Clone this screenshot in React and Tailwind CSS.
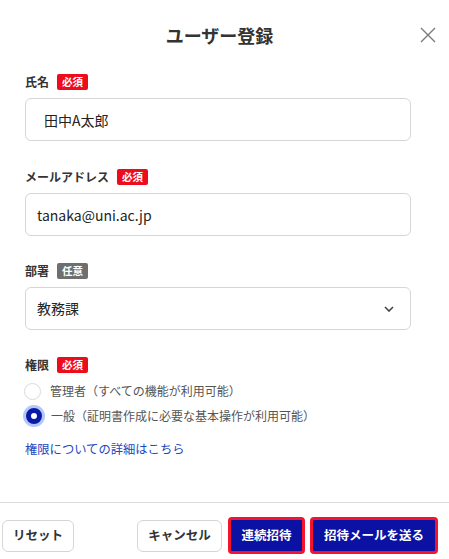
import { useState } from "react";

function Badge({ children, gray }) {
  return (
    <span
      className={`inline-flex items-center justify-center h-4 w-[31px] rounded-[2px] text-[10.5px] font-bold leading-none text-white ${
        gray ? "bg-[#6f6f6f]" : "bg-[#ec0c1c]"
      }`}
    >
      {children}
    </span>
  );
}

function FieldLabel({ label, badge, gray }) {
  return (
    <div className="flex h-4 items-center gap-2">
      <span className="text-[12px] font-bold leading-none text-[#333]">{label}</span>
      <Badge gray={gray}>{badge}</Badge>
    </div>
  );
}

function Radio({ checked, label, onClick }) {
  return (
    <label className="flex h-5 cursor-pointer items-center gap-[9px]" onClick={onClick}>
      {checked ? (
        <span className="ml-[1px] h-4 w-4 rounded-full border-[5px] border-[#0a1aa8] bg-white ring-[3px] ring-[#b3c8fa]" />
      ) : (
        <span className="ml-[-1px] h-[17px] w-[17px] rounded-full border border-[#d9d9d9] bg-white" />
      )}
      <span className="text-[12px] leading-none text-[#555]">{label}</span>
    </label>
  );
}

export default function App() {
  const [role, setRole] = useState("general");

  return (
    <div className="relative h-[559px] w-[449px] overflow-hidden bg-white font-['Noto_Sans_CJK_JP','Noto_Sans',sans-serif] text-[#222]">
      {/* Header */}
      <div className="relative flex h-[70px] items-center justify-center pr-[10px]">
        <h1 className="text-[18px] font-bold leading-none text-[#333]">ユーザー登録</h1>
        <button className="absolute right-[13px] top-[27px] text-[#7a7a7a]">
          <svg width="16" height="16" viewBox="0 0 16 16" fill="none" stroke="currentColor" strokeWidth="1.4">
            <path d="M1 1 L15 15 M15 1 L1 15" />
          </svg>
        </button>
      </div>

      {/* Form */}
      <div className="flex flex-col px-[25px]">
        <div className="mt-[4px]">
          <FieldLabel label="氏名" badge="必須" />
          <input
            readOnly
            defaultValue="田中A太郎"
            className="mt-2 h-[43px] w-[386px] rounded-md border border-[#d6d6d6] pl-[18px] text-[14px] text-[#222] outline-none"
          />
        </div>

        <div className="mt-[28px]">
          <FieldLabel label="メールアドレス" badge="必須" />
          <input
            readOnly
            defaultValue="tanaka@uni.ac.jp"
            className="mt-2 h-[43px] w-[386px] rounded-md border border-[#d6d6d6] pl-[11px] text-[14px] text-[#222] outline-none"
          />
        </div>

        <div className="mt-[27px]">
          <FieldLabel label="部署" badge="任意" gray />
          <div className="mt-2 flex h-[43px] w-[386px] items-center justify-between rounded-md border border-[#d6d6d6] pl-[11px] pr-[16px]">
            <span className="text-[14px] text-[#222]">教務課</span>
            <svg width="10" height="6" viewBox="0 0 10 6" fill="none" stroke="#444" strokeWidth="1.6">
              <path d="M1 1 L5 5 L9 1" />
            </svg>
          </div>
        </div>

        <div className="mt-[27px]">
          <FieldLabel label="権限" badge="必須" />
          <div className="mt-[8px] flex flex-col gap-[5px]">
            <Radio
              checked={role === "admin"}
              label="管理者（すべての機能が利用可能）"
              onClick={() => setRole("admin")}
            />
            <Radio
              checked={role === "general"}
              label="一般（証明書作成に必要な基本操作が利用可能）"
              onClick={() => setRole("general")}
            />
          </div>
          <a className="mt-[15px] block text-[12.3px] leading-4 text-[#1e47c0]">
            権限についての詳細はこちら
          </a>
        </div>
      </div>

      {/* Footer */}
      <div className="mt-[45px] border-t border-[#dcdcdc]">
        <div className="flex items-center justify-between pl-[2px] pr-[11px] pt-[14px]">
          <button className="h-8 w-[72px] rounded-md border border-[#d6d6d6] bg-white text-[12.5px] font-bold text-[#333]">
            リセット
          </button>
          <div className="flex items-center">
            <button className="h-8 w-[85px] rounded-md border border-[#d6d6d6] bg-white text-[12.5px] font-bold text-[#333]">
              キャンセル
            </button>
            <button className="ml-[6px] h-[37px] w-[77px] rounded-[4px] border-[3px] border-[#f5132b] bg-[#0b11a2] text-[12.5px] font-bold text-white">
              連続招待
            </button>
            <button className="ml-[5px] h-[37px] w-[128px] rounded-[4px] border-[3px] border-[#f5132b] bg-[#0b11a2] text-[12.5px] font-bold text-white">
              招待メールを送る
            </button>
          </div>
        </div>
      </div>
    </div>
  );
}
